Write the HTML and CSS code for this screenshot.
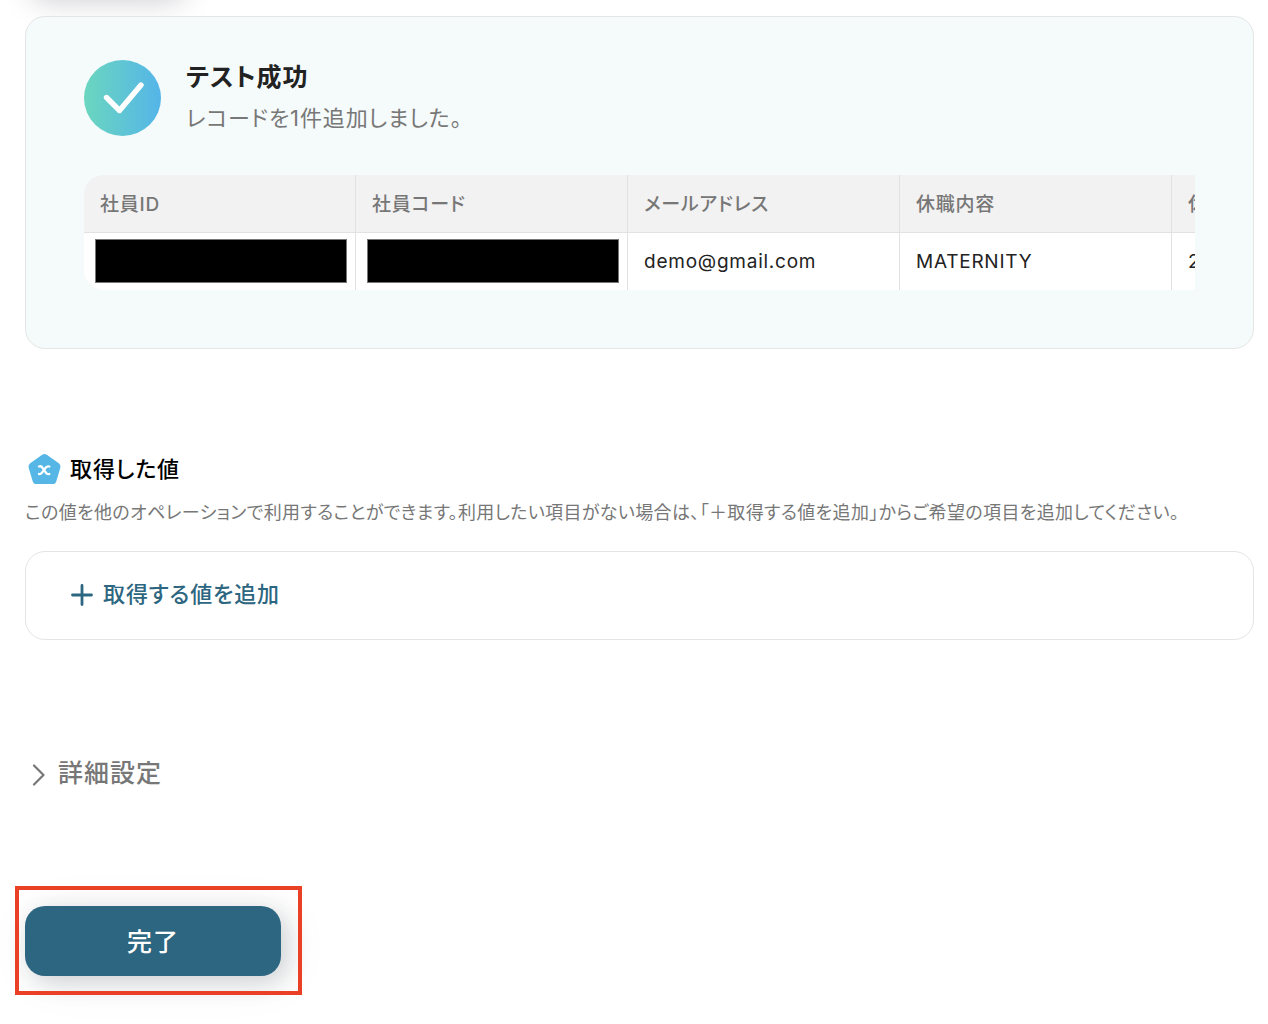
FILE: index.html
```html
<!DOCTYPE html>
<html lang="ja">
<head>
<meta charset="utf-8">
<meta name="viewport" content="width=device-width, initial-scale=1">
<title>テスト成功</title>
<link rel="stylesheet" href="styles.css">
</head>
<body>
<main class="page">
  <section class="result">
    <header class="result-head">
      <svg class="result-icon" viewBox="0 0 77 76" aria-hidden="true">
        <defs>
          <linearGradient id="success" x1="0" y1="0" x2="1" y2="0">
            <stop offset="0" stop-color="#6bd6bf"/>
            <stop offset="1" stop-color="#54b5e8"/>
          </linearGradient>
        </defs>
        <ellipse cx="38.5" cy="38" rx="38.5" ry="38" fill="url(#success)"/>
        <path d="M22.5 37.5 L35.5 50.5 L57 25" fill="none" stroke="#fff" stroke-width="5.4" stroke-linecap="round" stroke-linejoin="round"/>
      </svg>
      <div class="result-text">
        <h2 class="result-title">テスト成功</h2>
        <p class="result-note">レコードを1件追加しました。</p>
      </div>
    </header>
    <div class="table-scroll">
      <table class="records">
        <thead>
          <tr><th scope="col">社員ID</th><th scope="col">社員コード</th><th scope="col">メールアドレス</th><th scope="col">休職内容</th><th scope="col">休職開始日</th></tr>
        </thead>
        <tbody>
          <tr>
            <td class="masked"><span class="mask"></span></td>
            <td class="masked"><span class="mask"></span></td>
            <td>demo@gmail.com</td>
            <td>MATERNITY</td>
            <td>2</td>
          </tr>
        </tbody>
      </table>
    </div>
  </section>

  <section class="values">
    <h3 class="values-title">
      <svg class="values-icon" viewBox="0 0 38 34" aria-hidden="true">
        <path d="M19.500 6 L31.500 14.500 L27.500 28 H11.500 L7.500 14.500 Z" fill="#56b7e6" stroke="#56b7e6" stroke-width="8" stroke-linejoin="round"/>
        <path d="M14 14.500 C15.500 14 16.800 14.500 17.600 15.800 L20.800 20.600 C21.600 21.900 22.800 22.400 24.300 22" fill="none" stroke="#fff" stroke-width="2.300" stroke-linecap="round"/>
        <path d="M24.300 14.500 C22.800 14.100 21.600 14.600 20.600 15.800 L17 20.600 C16 21.900 15 22.300 14 22" fill="none" stroke="#fff" stroke-width="2.300" stroke-linecap="round"/>
      </svg>
      取得した値
    </h3>
    <p class="values-note">この値を他のオペレーションで利用することができます。利用したい項目がない場合は、「＋取得する値を追加」からご希望の項目を追加してください。</p>
    <div class="values-box">
      <button type="button" class="add-button">
        <svg class="add-icon" viewBox="0 0 22 22" aria-hidden="true"><path d="M11 1.500 V20.500 M1.500 11 H20.500" fill="none" stroke="#2d6680" stroke-width="2.800" stroke-linecap="round"/></svg>
        取得する値を追加
      </button>
    </div>
  </section>

  <details class="advanced">
    <summary class="advanced-title">
      <svg class="advanced-icon" viewBox="0 0 14 26" aria-hidden="true"><path d="M2 5.500 L11.500 15 L2 24.500" fill="none" stroke="#777" stroke-width="2.200" stroke-linecap="round" stroke-linejoin="round"/></svg>
      詳細設定
    </summary>
  </details>

  <div class="actions">
    <button type="button" class="done-button">完了</button>
  </div>
</main>
</body>
</html>
```
FILE: styles.css
```css
* {
  box-sizing: border-box;
  letter-spacing: 0.04em;
}

body {
  margin: 0;
  background: #fff;
  color: #222;
  font-family: Inter, "Noto Sans CJK JP", sans-serif;
  font-feature-settings: "palt";
}

h2, h3, p {
  margin: 0;
}

button {
  font: inherit;
  font-feature-settings: inherit;
  border: 0;
  cursor: pointer;
}

.page {
  position: relative;
  padding: 16px 14px 48px 25px;
  overflow: hidden;
}

/* shadow of the control scrolled off above */
.page::before {
  content: "";
  position: absolute;
  top: -76px;
  left: 25px;
  width: 156px;
  height: 70px;
  border-radius: 20px;
  box-shadow: 5px 5px 30px rgba(30, 30, 50, 0.25);
}

.result {
  position: relative;
  padding: 43px 58px 58px;
  border: 1px solid #e4e5e5;
  border-radius: 20px;
  background: #f5fafa;
}

.result-head {
  display: flex;
  align-items: center;
  gap: 25px;
}

.result-icon {
  width: 77px;
  height: 76px;
}

.result-text {
  display: grid;
  gap: 6px;
}

.result-title {
  font-size: 25px;
  line-height: 35px;
  font-weight: 600;
}

.result-note {
  color: #777;
  font-size: 22px;
  line-height: 35px;
}

.table-scroll {
  margin-top: 39px;
  overflow-x: auto;
  scrollbar-width: none;
  border-radius: 20px 0 0 20px;
}

.records {
  width: 1360px;
  table-layout: fixed;
  border-collapse: separate;
  border-spacing: 0;
  background: #fff;
  font-size: 19px;
  line-height: 24px;
}

.records th,
.records td {
  height: 58px;
  padding: 0 16px;
  border-right: 1px solid #e2e2e2;
  text-align: left;
}

.records td {
  height: 57px;
}

.records th {
  padding-top: 2px;
  border-bottom: 1px solid #e2e2e2;
  background: #f2f2f2;
  color: #777;
  font-weight: 500;
}

.records .masked {
  padding: 0 8px 2px 11px;
}

.mask {
  display: block;
  height: 44px;
  border: 1px solid #777;
  background: #000;
}

.values {
  margin-top: 102px;
}

.values-title {
  display: flex;
  align-items: center;
  gap: 7px;
  color: #000;
  font-size: 22px;
  line-height: 36px;
  font-weight: 500;
}

.values-icon {
  width: 38px;
  height: 34px;
}

.values-note {
  margin-top: 13px;
  color: #777;
  font-size: 18px;
  line-height: 26px;
  letter-spacing: 0.02em;
}

.values-box {
  margin-top: 25px;
  padding: 23px 45px 25px;
  border: 1px solid #e4e4e4;
  border-radius: 20px;
}

.add-button {
  display: flex;
  align-items: center;
  gap: 10px;
  padding: 0;
  background: none;
  color: #2d6680;
  font-size: 22px;
  line-height: 39px;
  font-weight: 500;
}

.add-icon {
  width: 22px;
  height: 22px;
}

.advanced {
  margin-top: 114px;
}

.advanced-title {
  display: flex;
  align-items: center;
  gap: 12px;
  padding-left: 7px;
  color: #777;
  font-size: 25px;
  line-height: 38px;
  font-weight: 500;
  cursor: pointer;
  list-style: none;
}

.advanced-icon {
  width: 14px;
  height: 26px;
}

.actions {
  position: relative;
  width: 256px;
  margin-top: 114px;
}

/* highlight frame round the button */
.actions::after {
  content: "";
  position: absolute;
  inset: -20px -21px -19px -10px;
  border: 4px solid #ea4025;
  pointer-events: none;
}

.done-button {
  display: block;
  width: 100%;
  height: 70px;
  padding: 0 0 2px;
  border-radius: 20px;
  background: #2d6680;
  color: #fff;
  font-size: 25px;
  font-weight: 500;
  box-shadow: 6px 6px 24px rgba(20, 40, 50, 0.18), 6px 6px 50px rgba(20, 40, 50, 0.06);
}
```
